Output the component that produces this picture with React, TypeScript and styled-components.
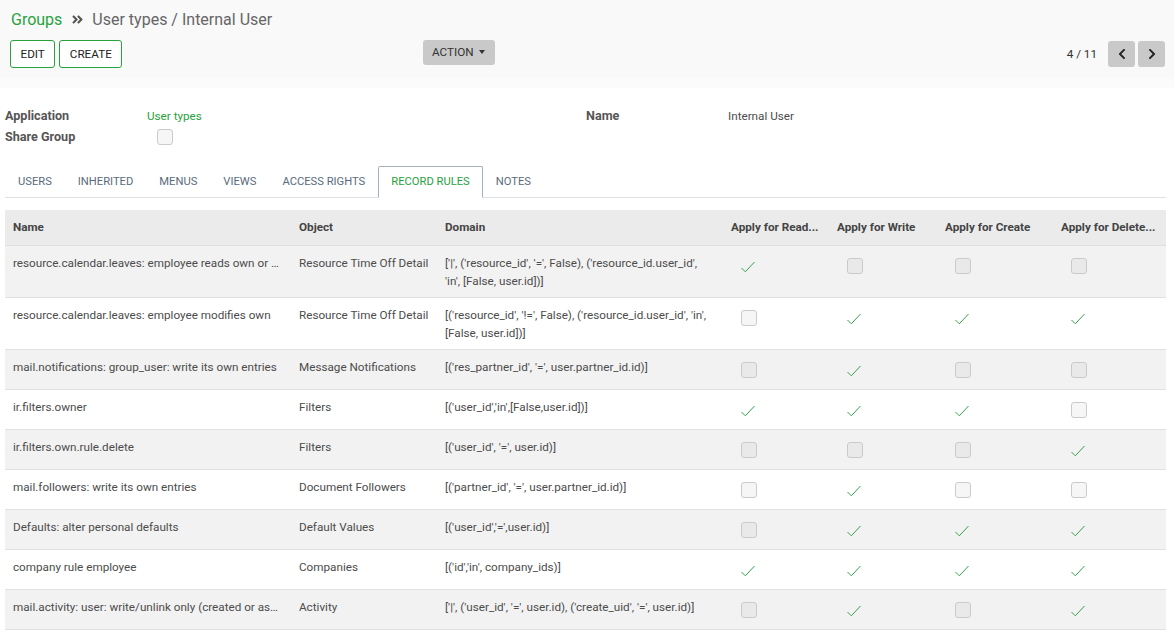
import styled, { createGlobalStyle } from "styled-components";
import { FaAngleDoubleRight, FaChevronLeft, FaChevronRight } from "react-icons/fa";

const GlobalStyle = createGlobalStyle`
  body {
    margin: 0;
    background: #ffffff;
    font-family: Roboto, "Liberation Sans", sans-serif;
    font-size: 11.7px;
    color: #4c4c4c;
  }
  * { box-sizing: border-box; }
`;

const ControlPanel = styled.div`
  background: #f9f9f9;
  height: 78px;
  padding: 7px 9px 0 10px;
`;

const Breadcrumb = styled.div`
  display: flex;
  align-items: center;
  height: 24px;
  font-size: 16px;
  color: #666666;
  gap: 8px;
  padding-left: 1px;
`;

const Crumb = styled.span`
  color: #28a23e;
`;

const Sep = styled.span`
  display: flex;
  align-items: center;
  color: #555;
  font-size: 13px;
  margin-left: 1px;
`;

const BottomRow = styled.div`
  display: grid;
  grid-template-columns: 413px 1fr auto;
  align-items: start;
  margin-top: 9px;
`;

const ButtonGroup = styled.div`
  display: flex;
  gap: 4px;
`;

const OutlineButton = styled.button`
  height: 28px;
  padding: 0 9.5px;
  background: #ffffff;
  border: 1px solid #28a23e;
  border-radius: 3px;
  font-family: inherit;
  font-size: 11.7px;
  color: #222;
  text-transform: uppercase;
`;

const ActionButton = styled.button`
  height: 25px;
  padding: 0 10px 2px 9px;
  background: #c9c9c9;
  border: none;
  border-radius: 3px;
  font-family: inherit;
  font-size: 11.7px;
  color: #333;
  display: flex;
  align-items: center;
  gap: 5px;
  justify-self: start;
`;

const Caret = styled.span`
  width: 0;
  height: 0;
  border-left: 3.5px solid transparent;
  border-right: 3.5px solid transparent;
  border-top: 4px solid #333;
`;

const Pager = styled.div`
  display: flex;
  align-items: center;
  height: 28px;
`;

const PagerValue = styled.span`
  color: #333;
  margin-right: 8px;
`;

const PagerButton = styled.button`
  width: 27px;
  height: 26px;
  margin-left: 3px;
  background: #c9c9c9;
  border: none;
  border-radius: 3px;
  color: #222;
  display: flex;
  align-items: center;
  justify-content: center;
  padding: 0;
  font-size: 12px;
`;

const Band = styled.div`
  height: 10px;
  background: #fbfbfb;
`;

const Sheet = styled.div`
  padding: 17px 8px 0 5px;
`;

const FieldGroups = styled.div`
  display: grid;
  grid-template-columns: 581px 1fr;
`;

const FieldGroup = styled.div`
  display: grid;
  grid-template-columns: 142px 1fr;
  grid-auto-rows: 21px;
  align-items: center;
`;

const Label = styled.span`
  font-weight: 700;
  font-size: 12.6px;
  color: #555;
`;

const Value = styled.span<{ $link?: boolean }>`
  color: ${(p) => (p.$link ? "#28a23e" : "#4c4c4c")};
`;

const Tabs = styled.div`
  display: flex;
  margin-top: 19px;
  border-bottom: 1px solid #dee2e6;
`;

const Tab = styled.div<{ $active?: boolean }>`
  padding: 6px 12px;
  line-height: 18px;
  font-size: 11.2px;
  margin-bottom: -1px;
  text-transform: uppercase;
  color: ${(p) => (p.$active ? "#28a23e" : "#5a6b7c")};
  border: 1px solid ${(p) => (p.$active ? "#a3b1bf" : "transparent")};
  border-bottom-color: ${(p) => (p.$active ? "#ffffff" : "transparent")};
  background: ${(p) => (p.$active ? "#ffffff" : "transparent")};
  border-radius: 2px 2px 0 0;
`;

const Table = styled.table`
  margin-top: 12px;
  width: 1161px;
  table-layout: fixed;
  border-collapse: collapse;
`;

const Th = styled.th`
  text-align: left;
  font-weight: 700;
  color: #444;
  background: #ebebeb;
  padding: 8px 8px 9px;
  line-height: 18px;
  white-space: nowrap;
  overflow: hidden;
  text-overflow: ellipsis;
  border-bottom: 1px solid #dcdfe3;
`;

const Row = styled.tr<{ $striped: boolean }>`
  background: ${(p) => (p.$striped ? "#f2f2f2" : "#ffffff")};
  border-bottom: 1px solid #dee2e6;
`;

const Td = styled.td<{ $nowrap?: boolean }>`
  padding: 8px 8px 7px;
  line-height: 18px;
  vertical-align: top;
  color: #4c4c4c;
  white-space: ${(p) => (p.$nowrap ? "nowrap" : "normal")};
  overflow: hidden;
  text-overflow: ellipsis;
`;

const BoxWrap = styled.div`
  height: 24px;
  display: flex;
  align-items: center;
  padding-left: 10px;
`;

const EmptyBox = styled.span`
  display: block;
  width: 16px;
  height: 16px;
  border: 1px solid #cbcbcb;
  border-radius: 3px;
  background: rgba(0, 0, 0, 0.035);
`;

const FieldBox = styled(EmptyBox)`
  margin-left: 10px;
`;

function Check({ checked }: { checked: boolean }) {
  if (!checked) return <EmptyBox />;
  return (
    <svg width="16" height="16" viewBox="0 0 16 16">
      <path d="M0.5 10 L4.3 13.8 L13.5 4" fill="none" stroke="#3aa14c" strokeWidth="1" />
    </svg>
  );
}

interface IRule {
  name: string;
  model: string;
  domain: string;
  perms: boolean[];
}

const rules: IRule[] = [
  {
    name: "resource.calendar.leaves: employee reads own or global leaves",
    model: "Resource Time Off Detail",
    domain: "['|', ('resource_id', '=', False), ('resource_id.user_id', 'in', [False, user.id])]",
    perms: [true, false, false, false],
  },
  {
    name: "resource.calendar.leaves: employee modifies own",
    model: "Resource Time Off Detail",
    domain: "[('resource_id', '!=', False), ('resource_id.user_id', 'in', [False, user.id])]",
    perms: [false, true, true, true],
  },
  {
    name: "mail.notifications: group_user: write its own entries",
    model: "Message Notifications",
    domain: "[('res_partner_id', '=', user.partner_id.id)]",
    perms: [false, true, false, false],
  },
  {
    name: "ir.filters.owner",
    model: "Filters",
    domain: "[('user_id','in',[False,user.id])]",
    perms: [true, true, true, false],
  },
  {
    name: "ir.filters.own.rule.delete",
    model: "Filters",
    domain: "[('user_id', '=', user.id)]",
    perms: [false, false, false, true],
  },
  {
    name: "mail.followers: write its own entries",
    model: "Document Followers",
    domain: "[('partner_id', '=', user.partner_id.id)]",
    perms: [false, true, false, false],
  },
  {
    name: "Defaults: alter personal defaults",
    model: "Default Values",
    domain: "[('user_id','=',user.id)]",
    perms: [false, true, true, true],
  },
  {
    name: "company rule employee",
    model: "Companies",
    domain: "[('id','in', company_ids)]",
    perms: [true, true, true, true],
  },
  {
    name: "mail.activity: user: write/unlink only (created or assigned)",
    model: "Activity",
    domain: "['|', ('user_id', '=', user.id), ('create_uid', '=', user.id)]",
    perms: [false, true, false, true],
  },
];

const tabs = ["Users", "Inherited", "Menus", "Views", "Access Rights", "Record Rules", "Notes"];

export default function App() {
  return (
    <>
      <GlobalStyle />
      <ControlPanel>
        <Breadcrumb>
          <Crumb>Groups</Crumb>
          <Sep>
            <FaAngleDoubleRight />
          </Sep>
          <span>User types / Internal User</span>
        </Breadcrumb>
        <BottomRow>
          <ButtonGroup>
            <OutlineButton>Edit</OutlineButton>
            <OutlineButton>Create</OutlineButton>
          </ButtonGroup>
          <ActionButton>
            ACTION <Caret />
          </ActionButton>
          <Pager>
            <PagerValue>4 / 11</PagerValue>
            <PagerButton>
              <FaChevronLeft />
            </PagerButton>
            <PagerButton>
              <FaChevronRight />
            </PagerButton>
          </Pager>
        </BottomRow>
      </ControlPanel>
      <Band />
      <Sheet>
        <FieldGroups>
          <FieldGroup>
            <Label>Application</Label>
            <Value $link>User types</Value>
            <Label>Share Group</Label>
            <FieldBox />
          </FieldGroup>
          <FieldGroup>
            <Label>Name</Label>
            <Value>Internal User</Value>
          </FieldGroup>
        </FieldGroups>
        <Tabs>
          {tabs.map((t) => (
            <Tab key={t} $active={t === "Record Rules"}>
              {t}
            </Tab>
          ))}
        </Tabs>
        <Table>
          <colgroup>
            <col style={{ width: 286 }} />
            <col style={{ width: 146 }} />
            <col style={{ width: 286 }} />
            <col style={{ width: 106 }} />
            <col style={{ width: 108 }} />
            <col style={{ width: 116 }} />
            <col style={{ width: 113 }} />
          </colgroup>
          <thead>
            <tr>
              <Th>Name</Th>
              <Th>Object</Th>
              <Th>Domain</Th>
              <Th>Apply for Read...</Th>
              <Th>Apply for Write</Th>
              <Th>Apply for Create</Th>
              <Th>Apply for Delete...</Th>
            </tr>
          </thead>
          <tbody>
            {rules.map((r, i) => (
              <Row key={r.name} $striped={i % 2 === 0}>
                <Td $nowrap>{r.name}</Td>
                <Td>{r.model}</Td>
                <Td>{r.domain}</Td>
                {r.perms.map((p, j) => (
                  <Td key={j}>
                    <BoxWrap>
                      <Check checked={p} />
                    </BoxWrap>
                  </Td>
                ))}
              </Row>
            ))}
          </tbody>
        </Table>
      </Sheet>
    </>
  );
}
